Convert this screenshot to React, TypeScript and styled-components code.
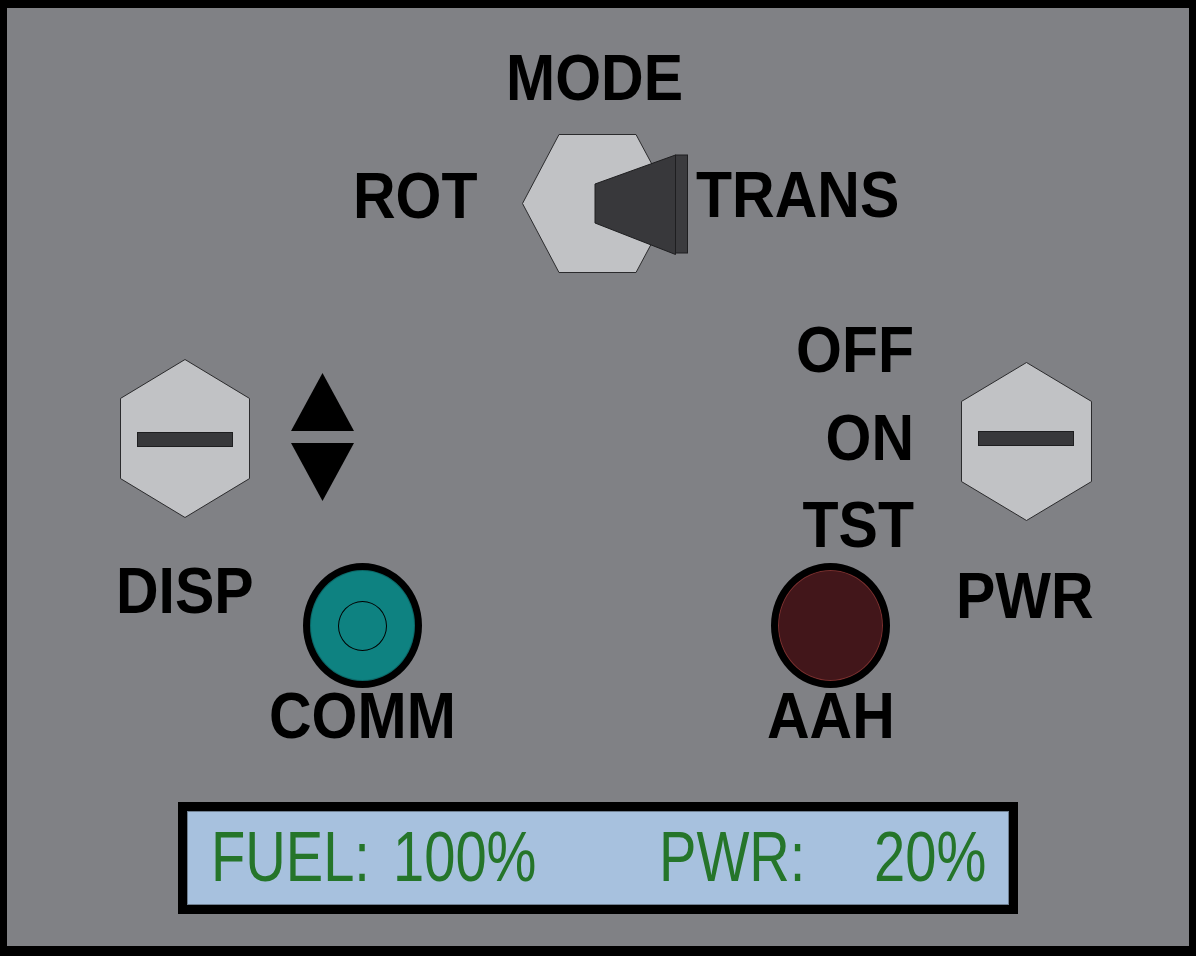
import React from "react";
import styled, { createGlobalStyle } from "styled-components";

const GlobalStyle = createGlobalStyle`
  html, body {
    margin: 0;
    padding: 0;
    background: #000;
    overflow: hidden;
  }
  body {
    font-family: "Liberation Sans", Arial, sans-serif;
  }
`;

const Panel = styled.div`
  box-sizing: border-box;
  margin: 8px 7px 10px 7px;
  height: 938px;
  background: #808185;
  display: flex;
  flex-direction: column;
  padding: 41px 0 32px 0;
`;

const Label = styled.span`
  display: block;
  font-family: "Liberation Sans", Arial, sans-serif;
  font-weight: 700;
  font-size: 59px;
  line-height: 59px;
  color: #000;
  white-space: nowrap;
  transform: scaleY(1.09);
`;

/* ---------- Mode selector ---------- */
const ModeSection = styled.section`
  display: flex;
  flex-direction: column;
  align-items: flex-start;
  padding-left: 346px;
`;

const ModeTitle = styled(Label)`
  margin-left: 153px;
`;

const ModeRow = styled.div`
  display: flex;
  align-items: flex-start;
  margin-top: 26px;
`;

const SideLabel = styled(Label)<{ $top: number; $left?: number }>`
  margin-top: ${(p) => p.$top}px;
  margin-left: ${(p) => p.$left ?? 0}px;
`;

const Selector = styled.svg`
  display: block;
  margin-left: 44.5px;
  flex: none;
`;

/* ---------- Controls ---------- */
const ControlsRow = styled.div`
  display: flex;
  justify-content: space-between;
  align-items: flex-start;
  margin-top: 48px;
  padding: 0 97px 0 109px;
`;

const LeftCluster = styled.div`
  display: flex;
  flex-direction: column;
  margin-top: 38px;
`;

const SwitchRow = styled.div`
  display: flex;
  align-items: flex-start;
  gap: 41px;
  padding-left: 4px;
`;

const Hex = styled.svg`
  display: block;
  flex: none;
`;

const Arrows = styled.svg`
  display: block;
  margin-top: 14px;
`;

const LampRow = styled.div`
  display: flex;
  align-items: flex-start;
  margin-top: 44px;
`;

const Indicator = styled.div<{ $left?: number; $top?: number }>`
  display: flex;
  flex-direction: column;
  align-items: center;
  justify-self: start;
  margin-left: ${(p) => p.$left ?? 0}px;
  margin-top: ${(p) => p.$top ?? 0}px;
`;

const Lamp = styled.div<{ $color: string; $glow: string }>`
  box-sizing: border-box;
  width: 119px;
  height: 125px;
  border-radius: 50%;
  border: 7px solid #000;
  background: ${(p) => p.$color};
  box-shadow: inset 0 0 0 1px ${(p) => p.$glow};
  display: flex;
  align-items: center;
  justify-content: center;
`;

const LampCore = styled.div`
  box-sizing: border-box;
  width: 49px;
  height: 50px;
  border-radius: 50%;
  border: 1.5px solid #000;
`;

const LampLabel = styled(Label)`
  margin-top: -1px;
`;

const RightCluster = styled.div`
  display: grid;
  grid-template-columns: 147px 138px;
  column-gap: 40px;
  align-items: start;
`;

const StateLabels = styled.div`
  display: flex;
  flex-direction: column;
  align-items: flex-end;
  gap: 28.5px;
`;

const PwrHex = styled(Hex)`
  margin-top: 41px;
  margin-left: 7px;
`;

const PwrLabel = styled(Label)`
  margin-top: 12px;
  margin-left: 2px;
`;

/* ---------- Display ---------- */
const Display = styled.div`
  box-sizing: border-box;
  margin-top: auto;
  align-self: center;
  width: 840px;
  height: 112px;
  border: 9px solid #000;
  background: #a7c1de;
  box-shadow: inset 0 0 0 1px #6f7f90;
  display: flex;
  align-items: flex-start;
  padding: 10px 0 0 23.6px;
`;

const Readout = styled.div<{ $width?: number }>`
  display: flex;
  width: ${(p) => (p.$width ? `${p.$width}px` : "auto")};
`;

const ReadoutText = styled.span<{ $width: number }>`
  display: inline-block;
  width: ${(p) => p.$width}px;
  font-family: "Liberation Sans", Arial, sans-serif;
  font-size: 71px;
  line-height: 71px;
  color: #25752a;
  white-space: nowrap;
  transform: scaleX(0.79);
  transform-origin: left center;
`;

const HEX_FILL = "#c1c2c5";
const HEX_STROKE = "#2b2b2d";
const SLOT = "#38383b";

function VerticalHex({ w, h, slotY }: { w: number; h: number; slotY: number }) {
  const top = h * 0.248;
  const bottom = h - top;
  return (
    <>
      <polygon
        points={`${w / 2},0.5 ${w - 0.5},${top} ${w - 0.5},${bottom} ${w / 2},${h - 0.5} 0.5,${bottom} 0.5,${top}`}
        fill={HEX_FILL}
        stroke={HEX_STROKE}
        strokeWidth={1}
      />
      <rect x={17.5} y={slotY} width={95} height={14} fill={SLOT} stroke="#1e1e20" strokeWidth={1} />
    </>
  );
}

export default function App() {
  return (
    <>
      <GlobalStyle />
      <Panel>
        <ModeSection>
          <ModeTitle>MODE</ModeTitle>
          <ModeRow>
            <SideLabel $top={33}>ROT</SideLabel>
            <Selector width={166} height={139} viewBox="0 0 166 139">
              <polygon
                points="0.5,69.5 37,0.5 114,0.5 151,69.5 114,138.5 37,138.5"
                fill={HEX_FILL}
                stroke={HEX_STROKE}
                strokeWidth={1}
              />
              <polygon points="73,50 73,89 153.5,120.5 153.5,21" fill={SLOT} stroke="#1e1e20" strokeWidth={1} />
              <rect x={153.5} y={21} width={12} height={98} fill="#3b3b3e" stroke="#1e1e20" strokeWidth={1} />
            </Selector>
            <SideLabel $top={32} $left={8}>
              TRANS
            </SideLabel>
          </ModeRow>
        </ModeSection>

        <ControlsRow>
          <LeftCluster>
            <SwitchRow>
              <Hex width={130} height={159} viewBox="0 0 130 159">
                <VerticalHex w={130} h={159} slotY={73.5} />
              </Hex>
              <Arrows width={63} height={128} viewBox="0 0 63 128">
                <polygon points="31.5,0 63,58 0,58" fill="#000" />
                <polygon points="0,70 63,70 31.5,128" fill="#000" />
              </Arrows>
            </SwitchRow>
            <LampRow>
              <Label>DISP</Label>
              <Indicator $left={15.3} $top={1}>
                <Lamp $color="#0e8281" $glow="rgba(0,0,0,0.2)">
                  <LampCore />
                </Lamp>
                <LampLabel>COMM</LampLabel>
              </Indicator>
            </LampRow>
          </LeftCluster>

          <RightCluster>
            <StateLabels>
              <Label>OFF</Label>
              <Label>ON</Label>
              <Label>TST</Label>
            </StateLabels>
            <PwrHex width={131} height={159} viewBox="0 0 131 159">
              <VerticalHex w={131} h={159} slotY={69.5} />
            </PwrHex>
            <Indicator $top={8}>
              <Lamp $color="#42161a" $glow="rgba(190,80,70,0.45)" />
              <LampLabel>AAH</LampLabel>
            </Indicator>
            <PwrLabel>PWR</PwrLabel>
          </RightCluster>
        </ControlsRow>

        <Display>
          <Readout $width={448}>
            <ReadoutText $width={182}>FUEL:</ReadoutText>
            <ReadoutText $width={150}>100%</ReadoutText>
          </Readout>
          <Readout>
            <ReadoutText $width={215.3}>PWR:</ReadoutText>
            <ReadoutText $width={120}>20%</ReadoutText>
          </Readout>
        </Display>
      </Panel>
    </>
  );
}
